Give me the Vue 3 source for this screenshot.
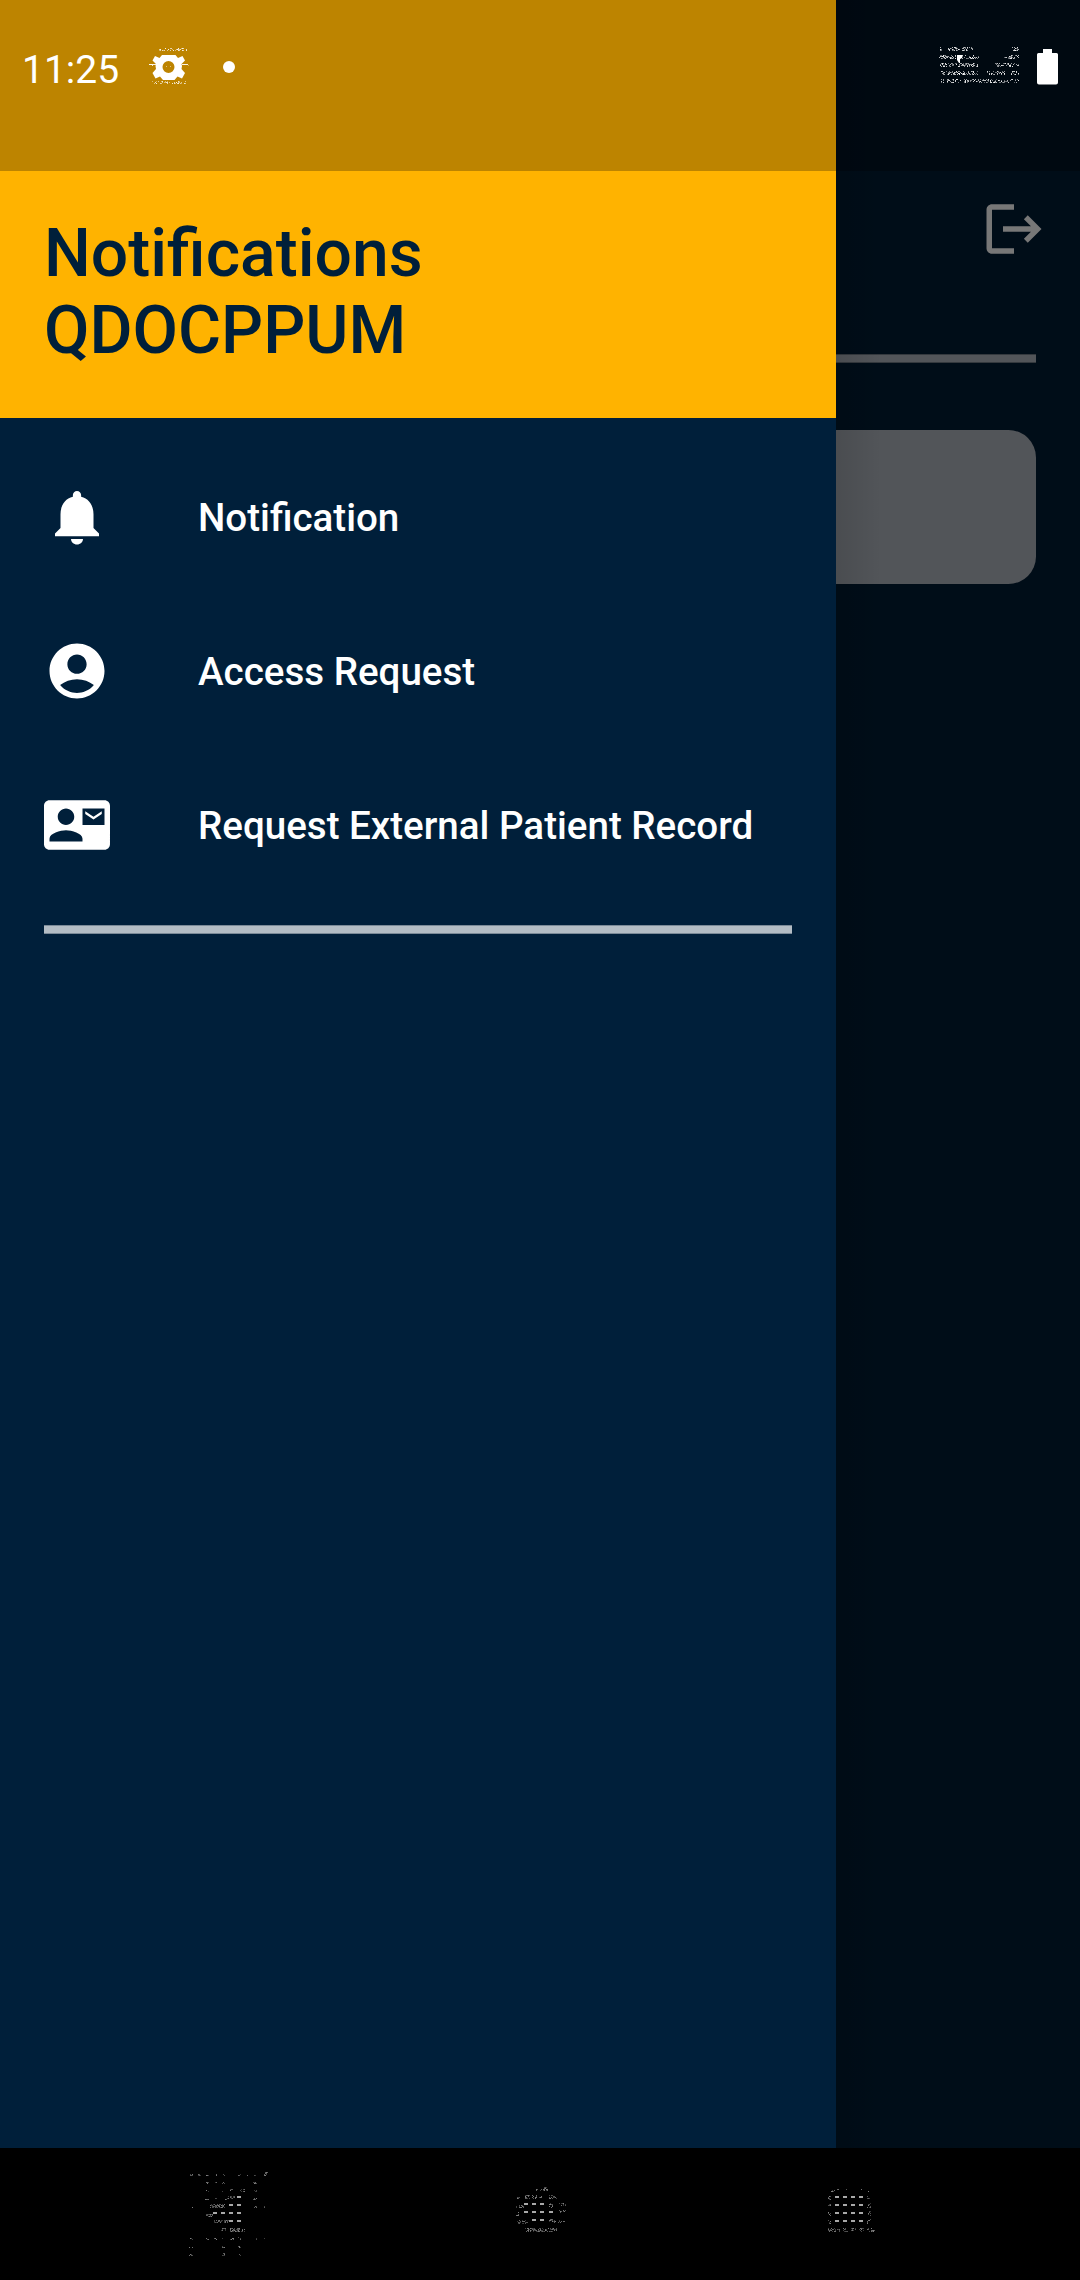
<script setup>
const menu = [
  {
    label: 'Notification',
    path: 'M12 22c1.2 0 2.18-.9 2.18-2H9.82c0 1.1.98 2 2.18 2zM18 16v-5c0-3.07-1.64-5.64-4.5-6.32V4c0-.83-.67-1.5-1.5-1.5s-1.5.67-1.5 1.5v.68C7.63 5.36 6 7.92 6 11v5l-2 2v1h16v-1l-2-2z',
  },
  {
    label: 'Access Request',
    path: 'M12 2C6.48 2 2 6.48 2 12s4.48 10 10 10 10-4.48 10-10S17.52 2 12 2zm0 4c1.93 0 3.5 1.57 3.5 3.5S13.93 13 12 13s-3.5-1.57-3.5-3.5S10.07 6 12 6zm0 14c-2.03 0-4.43-.82-6.14-2.88C7.55 15.8 9.68 15 12 15s4.45.8 6.14 2.12C16.43 19.18 14.03 20 12 20z',
  },
  {
    label: 'Request External Patient Record',
    path: 'M21 8V7l-3 2-3-2v1l3 2 3-2zm1-5H2C.9 3 0 3.9 0 5v14c0 1.1.9 2 2 2h20c1.1 0 1.99-.9 1.99-2L24 5c0-1.1-.9-2-2-2zM8 6c1.66 0 3 1.34 3 3s-1.34 3-3 3-3-1.34-3-3 1.34-3 3-3zm6 12H2v-1c0-2 4-3.1 6-3.1s6 1.1 6 3.1v1zm8-6h-8V6h8v6z',
  },
]

// Scatters single-pixel specks inside each [x, y, width, height] patch.
function specks(patches, density, seed) {
  let s = seed
  const rand = () => {
    s = (s * 1103515245 + 12345) % 2147483648
    return s / 2147483648
  }
  const out = []
  for (const [x, y, w, h] of patches) {
    for (let j = 0; j < h; j++) {
      for (let i = 0; i < w; i++) {
        if (rand() < density) out.push({ x: x + i, y: y + j, o: 0.35 + rand() * 0.6 })
      }
    }
  }
  return out
}

const signalSpecks = specks(
  [
    [1, 0, 3, 4], [10, 0, 26, 4], [74, 0, 7, 4],
    [1, 8, 40, 4], [66, 8, 15, 4],
    [2, 16, 38, 4], [57, 16, 24, 4],
    [3, 24, 37, 4], [49, 24, 18, 4], [72, 24, 9, 4],
    [3, 32, 3, 4], [9, 32, 72, 4],
  ],
  0.42,
  7,
)
const gearSpecks = specks([[11, 1, 28, 3], [1, 16, 4, 3], [36, 16, 5, 3], [4, 34, 34, 3]], 0.32, 21)

const navIcons = [
  {
    name: 'Back',
    cells: [[67, 66], [59, 74], [67, 74], [43, 82], [51, 82], [59, 82], [67, 82], [59, 90], [67, 90]],
    dots: specks(
      [
        [20, 44, 3, 2], [28, 44, 3, 2], [36, 45, 3, 1], [44, 44, 3, 2], [52, 44, 3, 2], [68, 44, 3, 2], [76, 44, 3, 2], [84, 45, 3, 1], [94, 42, 4, 4],
        [36, 52, 3, 2], [45, 52, 2, 2], [52, 52, 3, 2], [83, 52, 4, 2], [94, 53, 1, 1],
        [36, 60, 3, 2], [51, 61, 4, 1], [60, 59, 3, 3], [70, 59, 5, 3], [84, 60, 3, 2],
        [35, 69, 4, 1], [45, 68, 2, 2], [52, 69, 6, 1], [56, 66, 9, 3], [83, 68, 4, 2],
        [22, 77, 1, 1], [40, 74, 15, 4], [84, 76, 3, 2], [94, 76, 1, 2],
        [36, 84, 7, 3], [44, 90, 15, 3], [51, 98, 5, 3], [60, 98, 15, 4],
        [20, 108, 3, 2], [36, 108, 3, 2], [44, 108, 3, 2], [52, 108, 3, 2], [60, 108, 4, 2], [68, 107, 3, 3], [84, 108, 3, 2], [94, 107, 1, 2],
        [19, 117, 4, 1], [52, 116, 3, 2], [62, 116, 1, 2], [68, 116, 3, 2], [19, 124, 4, 2], [52, 123, 3, 3], [68, 124, 3, 2],
      ],
      0.58,
      5,
    ),
  },
  {
    name: 'Home',
    cells: [[34, 73], [42, 73], [50, 73], [34, 81], [42, 81], [50, 81], [59, 81], [42, 89], [50, 89]],
    dots: specks(
      [
        [45, 59, 14, 2], [54, 57, 3, 2], [27, 66, 3, 3], [35, 65, 12, 4], [49, 66, 5, 2], [59, 65, 8, 4],
        [26, 75, 8, 3], [59, 73, 4, 5], [68, 73, 8, 3], [26, 82, 4, 4], [68, 80, 8, 3],
        [27, 90, 11, 4], [59, 89, 5, 3], [64, 90, 12, 3], [34, 98, 33, 4],
      ],
      0.45,
      11,
    ),
  },
  {
    name: 'Recents',
    cells: [0, 1, 2, 3].flatMap((r) => [0, 1, 2, 3].map((c) => [35 + c * 8, 66 + r * 8])),
    dots: specks(
      [
        [30, 60, 5, 2], [37, 59, 2, 1], [45, 59, 2, 1], [53, 59, 2, 1], [61, 59, 2, 1], [68, 59, 3, 3],
        [28, 66, 3, 4], [28, 74, 3, 4], [28, 82, 3, 4], [28, 90, 3, 4],
        [67, 66, 4, 3], [67, 73, 4, 5], [67, 81, 4, 5], [67, 89, 4, 5],
        [28, 98, 8, 4], [37, 98, 3, 4], [43, 98, 5, 4], [51, 98, 5, 4], [59, 98, 5, 4], [67, 98, 8, 4],
      ],
      0.45,
      17,
    ),
  },
]
</script>

<template>
  <div class="screen">
    <main class="page">
      <header class="toolbar">
        <svg class="logout" viewBox="0 0 24 24">
          <path d="M17 7l-1.41 1.41L18.17 11H8v2h10.17l-2.58 2.58L17 17l5-5zM4 5h8V3H4c-1.1 0-2 .9-2 2v14c0 1.1.9 2 2 2h8v-2H4V5z" />
        </svg>
      </header>
      <div class="rule"></div>
      <div class="card"></div>
    </main>

    <aside class="drawer">
      <header class="heading">
        <h1>Notifications<br />QDOCPPUM</h1>
      </header>
      <nav class="menu">
        <a v-for="item in menu" :key="item.label" class="item">
          <svg viewBox="0 0 24 24"><path :d="item.path" fill-rule="evenodd" /></svg>
          <span>{{ item.label }}</span>
        </a>
      </nav>
      <div class="divider"></div>
    </aside>

    <div class="status">
      <span class="time">11:25</span>
      <svg class="gear" width="42" height="38" viewBox="0 0 42 38" fill="#fff">
        <path fill-rule="evenodd" d="M14 8H27.500L30 11L34.500 9L37 13.500L33.500 17L34 19L33.500 22L37 26L34 31.500L29.500 29.500L26.500 33H15L12 29.500L7.500 31.500L4.500 26L8 22L7.500 19L8 17L4.500 13.500L7 9L11.500 11ZM20.500 14A6 6 0 1 0 20.500 26A6 6 0 1 0 20.500 14Z" />
        <rect x="1" y="17" width="7" height="1" opacity=".9" /><rect x="34" y="17" width="6" height="1" opacity=".9" />
        <rect x="18" y="19" width="1" height="1" opacity=".5" /><rect x="22" y="19" width="1" height="1" opacity=".5" />
        <rect v-for="(d, i) in gearSpecks" :key="i" :x="d.x" :y="d.y" width="1" height="1" :opacity="d.o" />
      </svg>
      <i class="dot"></i>
      <svg class="signal" width="82" height="38" viewBox="0 0 82 38" fill="#fff">
        <path d="M19 8h6l-1 3-2 1v4h-1l-2-3z" />
        <rect v-for="(d, i) in signalSpecks" :key="i" :x="d.x" :y="d.y" width="1" height="1" :opacity="d.o" />
      </svg>
      <svg class="battery" width="21" height="36" viewBox="0 0 21 36" fill="#fff">
        <path d="M6 0h9v4h4.500a1.500 1.500 0 0 1 1.500 1.500v28a2 2 0 0 1-2 2H2a2 2 0 0 1-2-2v-28A1.500 1.500 0 0 1 1.500 4H6z" />
      </svg>
    </div>

    <footer class="navbar">
      <svg v-for="n in navIcons" :key="n.name" :aria-label="n.name" width="120" height="132" viewBox="0 18 120 132">
        <rect v-for="(c, i) in n.cells" :key="'c' + i" :x="c[0]" :y="c[1]" width="4" height="2" fill="#a8a8a8" />
        <rect v-for="(d, i) in n.dots" :key="'d' + i" :x="d.x" :y="d.y" width="1" height="1" fill="#8c8c8c" :opacity="d.o" />
      </svg>
    </footer>
  </div>
</template>

<style>
body {
  margin: 0;
  background: #000;
}
</style>

<style scoped>
.screen {
  position: relative;
  display: flex;
  flex-direction: column;
  width: 1080px;
  height: 2280px;
  overflow: hidden;
  background: #000d18;
  font-family: Roboto, sans-serif;
}
.page {
  box-sizing: border-box;
  flex: 1;
  padding: 171px 44px 0;
}
.toolbar {
  display: flex;
  justify-content: flex-end;
  box-sizing: border-box;
  height: 183px;
  padding-top: 25px;
  margin-right: -11px;
}
.logout {
  width: 66px;
  height: 66px;
  fill: #777;
}
.rule {
  height: 7px;
  background: #525559;
  border: solid #34393e;
  border-width: 1px 0;
}
.card {
  height: 154px;
  margin-top: 67px;
  border-radius: 27.5px;
  background: #525559;
}
.drawer {
  position: absolute;
  top: 0;
  left: 0;
  width: 836px;
  height: 2148px;
  background: #001f3a;
}
.drawer::after {
  content: '';
  position: absolute;
  top: 0;
  left: 836px;
  width: 46px;
  height: 2148px;
  background: linear-gradient(90deg, rgba(0, 0, 0, 0.1), transparent);
}
.heading {
  box-sizing: border-box;
  height: 418px;
  padding: 215px 44px 0;
  background: #ffb300;
}
h1 {
  margin: 0;
  color: #001f3a;
  font-size: 66px;
  font-weight: 500;
  line-height: 77px;
}
.menu {
  padding-top: 22px;
}
.item {
  display: flex;
  align-items: center;
  gap: 88px;
  height: 154px;
  padding-left: 44px;
  color: #fff;
  font-size: 38.55px;
  font-weight: 500;
}
.item svg {
  width: 66px;
  height: 66px;
  fill: #fff;
}
.divider {
  height: 7px;
  margin: 23px 44px 0;
  background: #b3bcc4;
  border: solid #7a8997;
  border-width: 1px 0;
}
.status {
  position: absolute;
  top: 0;
  left: 0;
  display: flex;
  align-items: flex-start;
  box-sizing: border-box;
  width: 1080px;
  height: 171px;
  padding: 47px 22px 0;
  background: rgba(0, 0, 0, 0.26);
}
.time {
  width: 126px;
  color: #fff;
  font-size: 39px;
  line-height: 47px;
}
.gear {
  display: block;
}
.dot {
  width: 12px;
  height: 12px;
  margin: 14px 0 0 33px;
  border-radius: 50%;
  background: #fff;
}
.signal {
  margin-left: auto;
}
.battery {
  margin: 2px 0 0 17px;
}
.navbar {
  display: flex;
  box-sizing: border-box;
  height: 132px;
  padding-left: 170px;
  gap: 200px;
  background: #000;
}
.navbar svg:last-child {
  margin-left: -10px;
}
</style>
